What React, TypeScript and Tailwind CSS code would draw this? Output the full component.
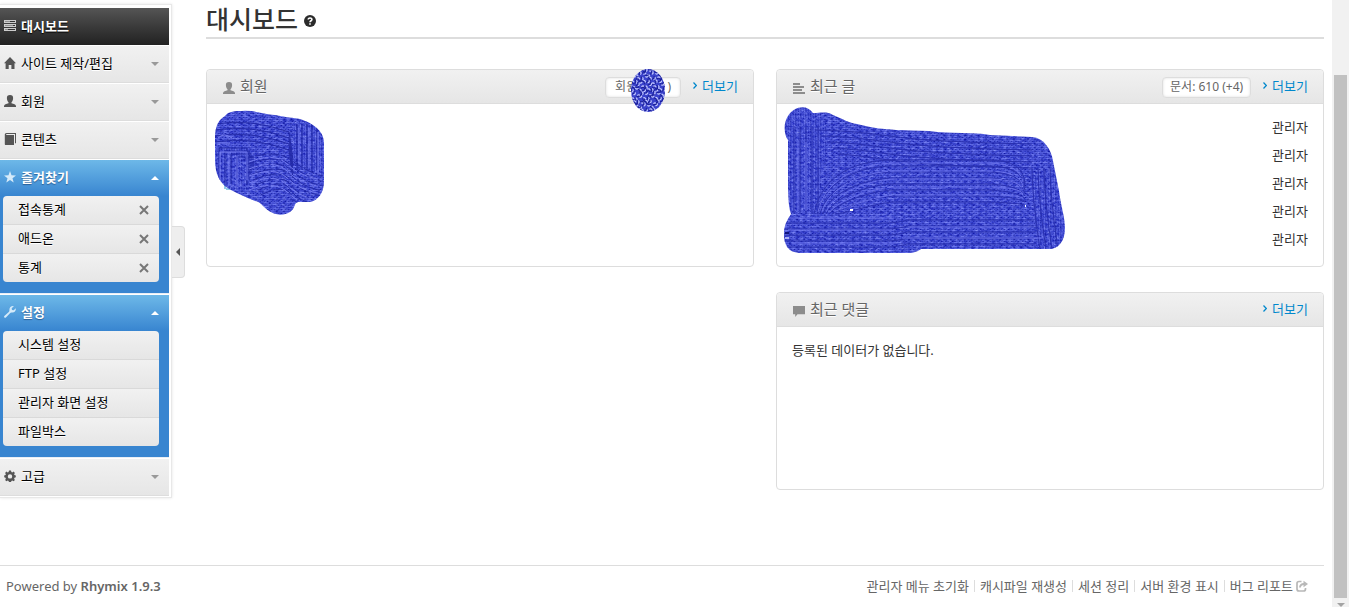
import React from "react";

type IconName = "dashboard" | "home" | "user" | "book" | "star" | "wrench" | "cog" | "list" | "comment";

function Icon({ name, className = "" }: { name: IconName; className?: string }) {
  return (
    <svg viewBox="0 0 12 12" className={"h-3 w-3 shrink-0 " + className} fill="currentColor" aria-hidden="true">
      {name === "dashboard" && (
        <g shapeRendering="crispEdges">
          <path d="M0 0h12v3H0zM0 4h12v3H0zM0 8h12v3H0z" fill="#cccccc" />
          <path d="M1 1h5v1H1zM1 5h8v1H1zM1 9h3v1H1z" fill="#8f8f8f" />
          <path d="M6 1h5v1H6zM9 5h2v1H9zM4 9h7v1H4z" fill="#333333" />
        </g>
      )}
      {name === "home" && <path d="M6 0 12 6.3H10.5V12H7.4V8H4.7V12H1.6V6.3H0L6 0Z" />}
      {name === "user" && (
        <path d="M6 0C8.2 0 9.2 1.2 9.1 3.2 9 5 8.5 6.2 7.5 7.2V8.3C9.5 9 12 9.4 12 11.2V12H0V11.2C0 9.4 2.5 9 4.5 8.3V7.2C3.5 6.2 3 5 2.9 3.2 2.8 1.2 3.8 0 6 0Z" />
      )}
      {name === "book" && (
        <path d="M2.6 0H12V10.3H11V1H2.6C1.9 1 1.9 2 2.6 2H10V12H1.8C1 12 .8 11.5.8 11V1.8C.8.7 1.4 0 2.6 0Z" />
      )}
      {name === "star" && <path d="M6 0 7.5 4.2 12 4.4 8.5 7.2 9.7 11.5 6 9 2.3 11.5 3.5 7.2 0 4.4 4.5 4.2Z" />}
      {name === "wrench" && (
        <path d="M9.8.2 7.7 2.3 8 4l1.7.3L11.8 2.200C12.300 4.700 10.400 7 7.800 6.500 7 6.400 6.400 6.700 5.700 7.500L1.900 11.600C.8 12.300-.4 11.100.3 10L4.500 6.300C5.200 5.700 5.500 5 5.400 4.200 5.200 1.700 7.300-.4 9.800.2Z" />
      )}
      {name === "cog" && (
        <path
          fillRule="evenodd"
          d="M5 .5h2l.4 1.500.9.400 1.300-.8 1.300 1.400-.8 1.200.4.900 1.300.4v1.800l-1.300.5-.4.900.8 1.300-1.300 1.300-1.300-.8-.9.400-.4 1.200H5l-.4-1.200-.9-.4-1.300.8L1.100 10l.8-1.300-.4-.9L.2 7.300V5.500l1.300-.4.4-.9L1.100 3l1.300-1.400 1.300.8.9-.4L5 .5ZM6 4.200a2.200 2.200 0 1 0 0 4.400 2.200 2.200 0 0 0 0-4.400Z"
        />
      )}
      {name === "list" && <path shapeRendering="crispEdges" d="M0 1h7v2H0zM0 4h11v2H0zM0 7h9v2H0zM0 10h12v2H0z" />}
      {name === "comment" && <path d="M0 1h12v8.300H4.500L2.200 12V9.300H0z" />}
    </svg>
  );
}

function Caret({ up = false }: { up?: boolean }) {
  return (
    <svg viewBox="0 0 8 4" className="h-1 w-2" fill="currentColor" aria-hidden="true">
      <path d={up ? "M0 4 4 0 8 4Z" : "M0 0H8L4 4Z"} />
    </svg>
  );
}

function MenuItem({ icon, label }: { icon: IconName; label: string }) {
  return (
    <li className="border-t border-b border-t-white border-b-[#dddddd] bg-linear-to-b from-[#f1f1f1] to-[#e6e6e6]">
      <button type="button" className="flex h-9 w-full items-center pr-[10px] pb-[2px] pl-1 text-left text-black [text-shadow:0_1px_0_#fff]">
        <Icon name={icon} className="text-[#555555]" />
        <span className="ml-[5px] flex-1">{label}</span>
        <span className="pt-[2px] text-[#999999]">
          <Caret />
        </span>
      </button>
    </li>
  );
}

function OpenMenu({ icon, label, items, removable = false }: { icon: IconName; label: string; items: string[]; removable?: boolean }) {
  return (
    <li className="border-t border-b border-t-white border-b-[#e8eef5] bg-[#3885d0] pb-[11px]">
      <button
        type="button"
        className="flex h-9 w-full items-center bg-linear-to-b from-[#6db8e8] to-[#3885d0] pr-[10px] pb-[2px] pl-1 text-left font-bold text-white [text-shadow:0_1px_1px_#2a5f96]"
      >
        <Icon name={icon} className="text-[#d5eaf9]" />
        <span className="ml-[5px] flex-1">{label}</span>
        <span className="pt-[2px]">
          <Caret up />
        </span>
      </button>
      <ul className="mr-[10px] ml-[3px] divide-y divide-[#d9d9d9] overflow-hidden rounded-sm">
        {items.map((item) => (
          <li key={item} className="flex h-[29px] items-center bg-linear-to-b from-[#f1f1f1] to-[#e6e6e6] pr-[10px] pl-[15px] last:h-7">
            <a href="#" className="flex-1 pb-[2px] text-black [text-shadow:0_1px_0_#fff]">
              {item}
            </a>
            {removable && (
              <button type="button" aria-label={item + " 삭제"} className="text-[#777777]">
                <svg viewBox="0 0 10 10" className="h-[10px] w-[10px]" stroke="currentColor" strokeWidth="2" aria-hidden="true">
                  <path d="M1 1 9 9M9 1 1 9" />
                </svg>
              </button>
            )}
          </li>
        ))}
      </ul>
    </li>
  );
}

function Card({ icon, title, badge, children }: { icon: IconName; title: string; badge?: React.ReactNode; children?: React.ReactNode }) {
  return (
    <section className="relative h-[198px] rounded border border-[#dddddd] bg-white">
      <header className="flex h-[34px] items-center rounded-t border-b border-[#dddddd] bg-linear-to-b from-[#f1f1f1] to-[#e6e6e6] pr-[15px] pl-4">
        <Icon name={icon} className="mt-[3px] text-[#8c8c8c]" />
        <h2 className="ml-[5px] flex-1 pb-[2px] text-[15px] leading-5 text-[#666666] [text-shadow:0_1px_0_#fff]">{title}</h2>
        {badge}
        <a href="#" className="ml-3 flex items-center gap-[5px] pb-[2px] text-[#0088cc]">
          <svg viewBox="0 0 4 7" className="h-[7px] w-1" fill="none" stroke="currentColor" strokeWidth="1.200" aria-hidden="true">
            <path d="M.5.5 3.300 3.500.5 6.500" />
          </svg>
          더보기
        </a>
      </header>
      {children}
    </section>
  );
}

const badgeClass =
  "mt-[2px] flex h-[21px] items-center rounded-sm border border-[#dddddd] bg-white pb-px text-xs leading-4 text-[#666666] shadow-[inset_0_0_3px_#dddddd]";

function BrushDefs() {
  return (
    <svg className="absolute h-0 w-0" aria-hidden="true">
      <defs>
        <pattern id="brush-h" width="7" height="4" patternUnits="userSpaceOnUse">
          <rect width="7" height="4" fill="#444dd4" />
          <path d="M0 .5h5M2 2.500h3" stroke="#626bea" strokeWidth="1" />
          <path d="M0 3.500h1M3 3.500h1M5 1.500h2" stroke="#2229a6" strokeWidth="1" />
        </pattern>
        <pattern id="brush-v" width="5" height="7" patternUnits="userSpaceOnUse">
          <rect width="5" height="7" fill="#444dd4" />
          <path d="M.5 0v6M3.500 3v3" stroke="#626bea" strokeWidth="1" />
          <path d="M1.500 0v5M4.500 1v1M4.500 5v1" stroke="#2f37b8" strokeWidth="1" />
        </pattern>
        <filter id="grain" x="0" y="0" width="100%" height="100%" colorInterpolationFilters="sRGB">
          <feTurbulence type="fractalNoise" baseFrequency="0.25 0.5" numOctaves="2" seed="7" result="n" />
          <feColorMatrix in="n" type="matrix" values="1.300 0 0 0 -.4  1.300 0 0 0 -.36  .8 0 0 0 .4  0 0 0 0 .4" result="c" />
          <feComposite in="c" in2="SourceAlpha" operator="in" result="g" />
          <feMerge>
            <feMergeNode in="SourceGraphic" />
            <feMergeNode in="g" />
          </feMerge>
        </filter>
      </defs>
    </svg>
  );
}

const memberShape =
  "M10 6C14 1 20 1 27 1 40 0 48 4 60 5 70 7 79 8 85 9 97 13 109 20 109 33V72C109 82 103 91 95 92H83C78 94 81 98 75 102 67 107 58 104 54 101 47 96 46 92 40 91 31 87 23 84 16 80 4 74 0 63 0 49V25C1 14 4 10 10 6Z";

function MemberScribble() {
  return (
    <svg viewBox="0 0 110 106" className="absolute top-10 left-2 h-[106px] w-[110px]" aria-hidden="true">
      <clipPath id="member-clip">
        <path d={memberShape} />
      </clipPath>
      <path d="M10 75v4M11 79h5M8 74h3" stroke="#2a95d0" fill="none" />
      <g clipPath="url(#member-clip)">
        <g filter="url(#grain)">
          <rect width="110" height="106" fill="url(#brush-h)" />
          <path d="M0 38H34V80H0zM78 12h32v55L78 50z" fill="url(#brush-v)" />
        </g>
        <g fill="none" stroke="#232aa8" strokeWidth="1">
          {[0, 6, 12, 18].map((d) => (
            <path key={d} d={`M${4 + d} ${86 - d}V${38 + d / 2}H${32 + d / 3}V${75 - d}M0 ${14 + d}Q35 ${8 + d} 74 ${22 + d}L78 ${50 + d}`} />
          ))}
          {[0, 5, 10, 15, 20, 25, 30, 35].map((d) => (
            <path key={d} strokeDasharray="11 2" d={`M${28 + d / 2} ${50 + d}Q${60 + d / 3} ${38 + d} ${76} ${50 + d}T108 ${66 + d}`} />
          ))}
          {[82, 87, 92, 97, 102].map((x) => (
            <path key={x} d={`M${x} 14V60`} />
          ))}
        </g>
        <g fill="none" stroke="#747cf0" strokeWidth="1">
          {[0, 7, 14, 21, 28].map((d) => (
            <path key={d} strokeDasharray="9 2" d={`M34 ${52 + d}Q60 ${42 + d} 72 ${54 + d}T107 ${70 + d}`} />
          ))}
          <path d="M3 28q6-6 14 0M2 33h13M5 80V42H32V70M14 76V46M22 76V46M84 18V54M94 18V58M103 22V65" />
        </g>
      </g>
    </svg>
  );
}

const postShape =
  "M4 10C10 0 23-2 29 7 37 7 43 5 49 9 59 13 65 17 73 18 88 22 100 23 112 24L145 25C167 28 190 26 206 29L248 31C260 32 267 43 269 55L275 85C277 100 281 112 281 122 281 136 274 143 265 143H137C130 148 124 147 116 147H15C4 146 0 139 0 128 0 118 4 113 7 108 4 100 4 84 4 70V34C0 29-1 17 4 10Z";

function PostScribble() {
  return (
    <svg viewBox="0 0 282 149" className="absolute top-[36px] left-[7px] h-[149px] w-[282px]" aria-hidden="true">
      <clipPath id="post-clip">
        <path d={postShape} />
      </clipPath>
      <g clipPath="url(#post-clip)">
        <g filter="url(#grain)">
          <rect width="282" height="149" fill="url(#brush-h)" />
          <path d="M0 0H34L44 24 34 106H5zM246 68l26-8 12 50v38h-30z" fill="url(#brush-v)" />
        </g>
        <g fill="none" stroke="#2930b0" strokeWidth="1">
          {[0, 6, 12, 18, 24, 30, 36, 42].map((d) => (
            <path key={d} d={`M${30 + d / 2} 108C${38 + d / 2} ${66 + d} ${76 + d / 2} ${54 + d} 110 ${54 + d}H${205 - d / 4}Q${240 - d / 4} ${54 + d} 241 ${78 + d / 2}`} />
          ))}
          {[0, 6, 12, 18, 24].map((d) => (
            <path key={d} d={`M${10 + d} 108V20M${31 + d} ${24 + d}Q62 ${24 + d} 105 ${30 + d}T248 ${38 + d}`} />
          ))}
          {[0, 6, 12, 18, 24].map((d) => (
            <path key={d} d={`M0 ${117 + d}H100Q115 ${117 + d} 123 ${114 + d}H250`} />
          ))}
          {[0, 6, 12, 18].map((d) => (
            <path key={d} d={`M${248 + d} 62Q${248 + d} 90 ${256 + d} 144`} />
          ))}
        </g>
        <g fill="none" stroke="#6971ea" strokeWidth="1">
          {[0, 8, 16, 24, 32].map((d) => (
            <path key={d} strokeDasharray="19 2" d={`M${34 + d / 2} 106C${42 + d / 2} ${70 + d} ${80 + d / 2} ${57 + d} 112 ${57 + d}H204Q235 ${57 + d} 239 ${76 + d / 2}`} />
          ))}
          <path d="M14 105V36M22 105V36M5 112H110M4 124H108M8 137H112M124 121H245M118 132H260" />
        </g>
      </g>
      <path d="M66 103h3v2h-3zM241 99h1v2h-1z" fill="#ffffff" />
      <path d="M1 126h4v2H1z" fill="#10147c" />
      <path d="M1 131h4v2H1z" fill="#aab0f5" />
    </svg>
  );
}

function BadgeScribble() {
  return (
    <svg viewBox="0 0 34 43" className="absolute -top-[9px] left-[25px] h-[43px] w-[34px]" aria-hidden="true">
      <clipPath id="badge-clip">
        <ellipse cx="17" cy="21.500" rx="17" ry="21.500" />
      </clipPath>
      <g clipPath="url(#badge-clip)">
        <rect width="34" height="43" fill="#3b43cc" />
        {Array.from({ length: 110 }, (_, i) => {
          const row = Math.floor(i / 10);
          const x = (i % 10) * 4 + (row % 2) * 2;
          const y = row * 4 + (i % 3);
          const turn = (i * 67) % 180;
          return (
            <g key={i} transform={`translate(${x} ${y}) rotate(${turn})`} fill="none">
              <path d="M-2 2.500Q0 0 2 2.500" stroke="#1a1f96" strokeWidth="1" />
              <path d="M-1.500.8Q0-1 1.500.8" stroke="#c3c8ff" strokeWidth="1.200" />
            </g>
          );
        })}
      </g>
    </svg>
  );
}

const footerLinks = ["관리자 메뉴 초기화", "캐시파일 재생성", "세션 정리", "서버 환경 표시", "버그 리포트"];

export default function App() {
  return (
    <div className="flex min-h-screen bg-white font-['Noto_Sans','Noto_Sans_CJK_KR',sans-serif] text-[13px] leading-5 text-[#333333]">
      <BrushDefs />
      <div className="flex min-w-0 flex-1 flex-col pr-2">
        <div className="flex flex-1 items-start">
          <div className="mt-1 flex shrink-0 items-start">
            <nav className="w-[172px] border-t border-r border-b border-[#e8e8e8] bg-white pt-[3px] pr-[2px] pb-px shadow-[0_0_3px_#e5e5e5]">
              <ul>
                <li>
                  <a
                    href="#"
                    className="flex h-[37px] items-center bg-linear-to-b from-[#555555] to-[#222222] pb-[2px] pl-1 font-bold text-white [text-shadow:0_1px_1px_#000]"
                  >
                    <Icon name="dashboard" />
                    <span className="ml-[5px]">대시보드</span>
                  </a>
                </li>
                <MenuItem icon="home" label="사이트 제작/편집" />
                <MenuItem icon="user" label="회원" />
                <MenuItem icon="book" label="콘텐츠" />
                <OpenMenu icon="star" label="즐겨찾기" items={["접속통계", "애드온", "통계"]} removable />
                <OpenMenu icon="wrench" label="설정" items={["시스템 설정", "FTP 설정", "관리자 화면 설정", "파일박스"]} />
                <MenuItem icon="cog" label="고급" />
              </ul>
            </nav>
            <button
              type="button"
              aria-label="메뉴 접기"
              className="mt-[222px] flex h-[52px] w-[13px] items-center justify-center rounded-r-sm border border-l-0 border-[#dddddd] bg-[#eeeeee] text-[#555555]"
            >
              <svg viewBox="0 0 4 8" className="h-2 w-1" fill="currentColor" aria-hidden="true">
                <path d="M4 0V8L0 4Z" />
              </svg>
            </button>
          </div>

          <main className="ml-[21px] min-w-0 flex-1">
            <div className="flex h-[39px] items-center border-b-2 border-[#dddddd]">
              <h1 className="text-[25px] leading-8 font-medium">대시보드</h1>
              <button type="button" aria-label="도움말" className="mt-1 ml-[6px]">
                <svg viewBox="0 0 12 12" className="h-3 w-3" aria-hidden="true">
                  <circle cx="6" cy="6" r="6" fill="#2b2b2b" />
                  <path d="M4.200 4.600C4.200 2.400 7.900 2.400 7.900 4.500 7.900 5.800 6 5.700 6 7.300" fill="none" stroke="#fff" strokeWidth="1.600" />
                  <path d="M5.200 8.200h1.600v1.500H5.200z" fill="#fff" />
                </svg>
              </button>
            </div>
            <div className="mt-[30px] grid grid-cols-2 items-start gap-[22px]">
              <Card
                icon="user"
                title="회원"
                badge={
                  <span className={badgeClass + " relative w-[76px] justify-between px-[9px]"}>
                    <span>회원</span>
                    <span>)</span>
                    <BadgeScribble />
                  </span>
                }
              >
                <MemberScribble />
              </Card>
              <div className="flex flex-col gap-[25px]">
                <Card icon="list" title="최근 글" badge={<span className={badgeClass + " px-[7px]"}>문서: 610 (+4)</span>}>
                  <ul className="px-[15px] pt-[9px] text-right leading-7">
                    {[1, 2, 3, 4, 5].map((n) => (
                      <li key={n}>관리자</li>
                    ))}
                  </ul>
                  <PostScribble />
                </Card>
                <Card icon="comment" title="최근 댓글">
                  <p className="px-[15px] pt-[9px] leading-7">등록된 데이터가 없습니다.</p>
                </Card>
              </div>
            </div>
          </main>
        </div>

        <footer className="flex h-[42px] items-center justify-between border-t border-[#dddddd] pr-4 pb-[2px] pl-[6px] text-[#666666]">
          <p>
            Powered by <strong className="font-semibold">Rhymix 1.9.3</strong>
          </p>
          <div className="flex items-center">
            {footerLinks.map((label, i) => (
              <React.Fragment key={label}>
                {i > 0 && <span className="mx-[5px] h-3 w-px bg-[#dddddd]" />}
                <a href="#">{label}</a>
              </React.Fragment>
            ))}
            <svg viewBox="0 0 12 12" className="ml-[3px] h-3 w-3" fill="none" stroke="#b8b8b8" aria-hidden="true">
              <path d="M5.500 1.500H3Q1 1.500 1 3.500V9Q1 11 3 11H7.500Q9.500 11 9.500 9V8" strokeWidth="1.700" />
              <path d="M4 7.500Q4 4 8 4" strokeWidth="1.900" />
              <path d="M7.500.8 12 4 7.500 7.200Z" fill="#b8b8b8" stroke="none" />
            </svg>
          </div>
        </footer>
      </div>

      <div className="flex w-[17px] shrink-0 flex-col bg-[#f1f1f1] px-[2px] pt-[75px]" aria-hidden="true">
        <div className="flex-1 bg-[#c1c1c1]" />
        <div className="flex h-[9px] items-end justify-center overflow-hidden text-[#a3a3a3]">
          <Caret />
        </div>
      </div>
    </div>
  );
}
